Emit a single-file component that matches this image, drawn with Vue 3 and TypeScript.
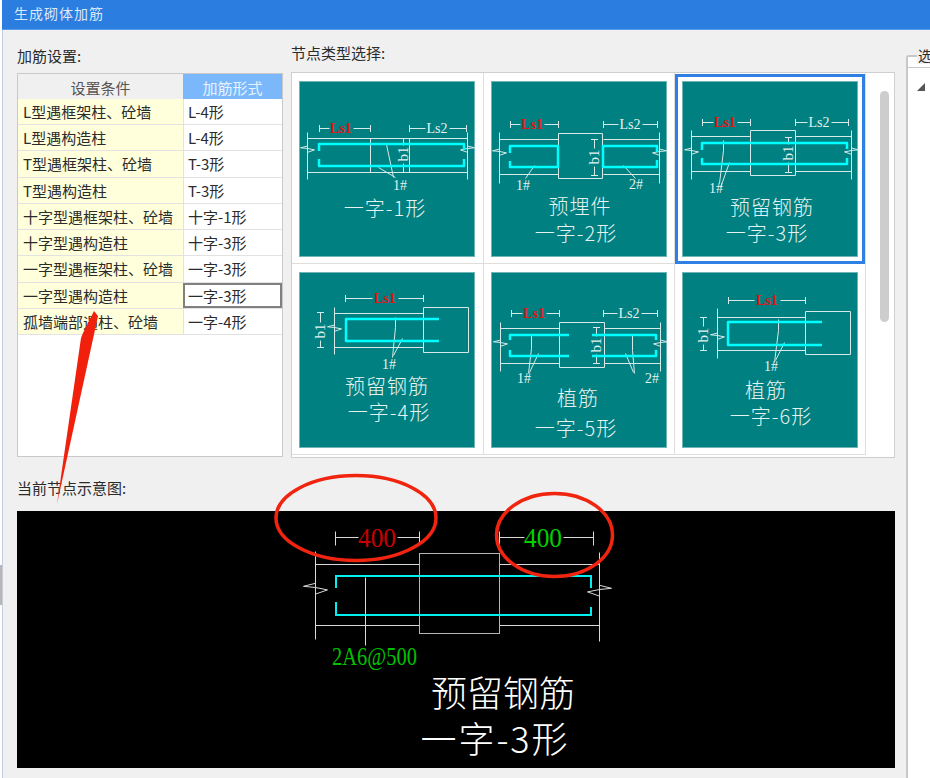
<template>
  <div class="page">
    <div class="desk-strip"><span class="strip-mark"></span></div>
    <div class="dialog">
      <div class="title-bar">生成砌体加筋</div>
      <div class="dialog-body">
        <div class="content">
          <div class="top-row">
            <section class="settings">
              <h3 class="label">加筋设置:</h3>
              <div class="rule-table">
                <div class="rule-head">
                  <div class="head-cond">设置条件</div>
                  <div class="head-form">加筋形式</div>
                </div>
                <div v-for="row in rules" :key="row.cond" class="rule-row">
                  <div class="cell-cond">{{ row.cond }}</div>
                  <div :class="['cell-form', { active: row.active }]">{{ row.form }}</div>
                </div>
              </div>
            </section>
            <section class="types">
              <h3 class="label">节点类型选择:</h3>
              <div class="type-panel">
                <div class="type-grid">
                  <div v-for="tile in tiles" :key="tile.id" class="type-cell">
                    <svg :class="['tile', { selected: tile.id === 3 }]" width="176" height="176" viewBox="0 0 176 176">
                      <path class="wire" :d="tile.wire" />
                      <path class="rebar" :d="tile.rebar" />
                      <text
                        v-for="t in tile.notes"
                        :key="t.text + t.x"
                        :class="['note', t.cls]"
                        :x="t.x"
                        :y="t.y"
                        :transform="t.cls === 'b1' ? `rotate(-90 ${t.x} ${t.y})` : undefined"
                      >{{ t.text }}</text>
                      <text
                        v-for="t in tile.titles"
                        :key="t.text"
                        class="tile-title"
                        :x="t.x"
                        :y="t.y - 1"
                      >{{ t.text }}</text>
                    </svg>
                  </div>
                </div>
                <div class="scroll-track"><div class="scroll-thumb"></div></div>
              </div>
            </section>
          </div>
          <h3 class="label preview-label">当前节点示意图:</h3>
          <svg class="preview" width="878" height="257" viewBox="17 511 878 257">
            <path class="dim" d="M335 531V545M335 537H358M397 537H419M419 531V545" />
            <path class="dim" d="M499 531V545M499 537H524M563 537H593M593 531V545" />
            <path class="wall" d="M315 551V639M599 552V641M315 564H419M499 564H599M315 625H419M499 625H599" />
            <path class="wall" :d="breakMark(315, 587, 12) + breakMark(599, 589, -12)" />
            <rect class="column" x="419.5" y="553.5" width="80" height="80" />
            <path class="rebar-big" d="M336 588V576H591V588M336 602V615H591V607" />
            <path class="wall" d="M365 577V645" />
            <text class="big-num red" x="377" y="537" textLength="38" lengthAdjust="spacingAndGlyphs">400</text>
            <text class="big-num green" x="543" y="537" textLength="38" lengthAdjust="spacingAndGlyphs">400</text>
            <text class="spacing" x="332" y="665" textLength="85" lengthAdjust="spacingAndGlyphs">2A6@500</text>
            <text class="caption" x="503" y="691">预留钢筋</text>
            <text class="caption wide" x="495" y="737">一字-3形</text>
          </svg>
        </div>
        <aside class="side-group">
          <span class="side-legend">选择</span>
          <div class="side-inner">
            <svg class="tree-arrow" width="8" height="8" viewBox="0 0 8 8"><path d="M8 0V8H0Z" /></svg>
          </div>
        </aside>
      </div>
    </div>
    <!-- red marks drawn over the screenshot -->
    <svg class="marks" width="930" height="778" viewBox="0 0 930 778">
      <ellipse cx="356" cy="518" rx="80" ry="42.5" />
      <ellipse cx="554.5" cy="535" rx="58" ry="41.5" />
      <polygon points="94,311 98,316 57,504 81,338 83,333" />
    </svg>
  </div>
</template>

<script setup lang="ts">
interface Rule {
  cond: string
  form: string
  active?: boolean
}

interface Note {
  x: number
  y: number
  text: string
  cls: string
}

interface Caption {
  x: number
  y: number
  text: string
}

interface Tile {
  id: number
  wire: string
  rebar: string
  notes: Note[]
  titles: Caption[]
}

const rules: Rule[] = [
  { cond: 'L型遇框架柱、砼墙', form: 'L-4形' },
  { cond: 'L型遇构造柱', form: 'L-4形' },
  { cond: 'T型遇框架柱、砼墙', form: 'T-3形' },
  { cond: 'T型遇构造柱', form: 'T-3形' },
  { cond: '十字型遇框架柱、砼墙', form: '十字-1形' },
  { cond: '十字型遇构造柱', form: '十字-3形' },
  { cond: '一字型遇框架柱、砼墙', form: '一字-3形' },
  { cond: '一字型遇构造柱', form: '一字-3形', active: true },
  { cond: '孤墙端部遇柱、砼墙', form: '一字-4形' }
]

const dimH = (a: number, b: number, y: number, cx: number, gap = 12) =>
  `M${a} ${y - 3.5}V${y + 3.5}M${a} ${y}H${cx - gap}M${cx + gap} ${y}H${b}M${b} ${y - 3.5}V${y + 3.5}`

const dimV = (x: number, a: number, b: number, cy: number, gap = 9) =>
  `M${x - 3.5} ${a}H${x + 3.5}M${x} ${a}V${cy - gap}M${x} ${cy + gap}V${b}M${x - 3.5} ${b}H${x + 3.5}`

// zigzag that marks a wall cut off, s scales and flips it
const breakMark = (x: number, y: number, s: number) =>
  `M${x} ${y - s * 0.35 * Math.sign(s)}L${x - s} ${y - s * 0.1 * Math.sign(s)}L${x} ${y}L${x + s} ${y + s * 0.2 * Math.sign(s)}L${x} ${y + s * 0.55 * Math.sign(s)}`

const small = 7

const tiles: Tile[] = [
  {
    id: 1,
    wire:
      dimH(20, 71, 47, 42) + dimH(110, 167, 47, 138) +
      'M8 51V98M168 51V98M8 57H168M8 91H168M71 57V91M110 57V91' +
      dimV(104, 57, 91, 73) +
      breakMark(8, 67, small) + breakMark(168, 67, -small) +
      'M87 63L94 96M79 86L96 96',
    rebar: 'M20 70V63H165V69M20 78V85H165V78',
    notes: [
      { x: 42, y: 47, text: 'Ls1', cls: 'ls-red' },
      { x: 138, y: 47, text: 'Ls2', cls: 'ls' },
      { x: 104, y: 73, text: 'b1', cls: 'b1' },
      { x: 101, y: 104, text: '1#', cls: 'num' }
    ],
    titles: [{ x: 86, y: 127, text: '一字-1形' }]
  },
  {
    id: 2,
    wire:
      dimH(19, 67, 43, 41) + dimH(112, 166, 43, 139) +
      'M8 51V102M168 51V102M8 58H67M112 58H168M8 93H67M112 93H168' +
      'M67 52H111V97H67Z' +
      dimV(103, 58, 94, 76) +
      breakMark(8, 70, small) + breakMark(168, 70, -small) +
      'M43 84L34 97M132 84L144 97',
    rebar: 'M19 72V65H67V86H19V80M166 71V65H112V86H166V79',
    notes: [
      { x: 41, y: 43, text: 'Ls1', cls: 'ls-red' },
      { x: 139, y: 43, text: 'Ls2', cls: 'ls' },
      { x: 103, y: 76, text: 'b1', cls: 'b1' },
      { x: 32, y: 104, text: '1#', cls: 'num' },
      { x: 145, y: 103, text: '2#', cls: 'num' }
    ],
    titles: [
      { x: 89, y: 125, text: '预埋件' },
      { x: 85, y: 152, text: '一字-2形' }
    ]
  },
  {
    id: 3,
    wire:
      dimH(20, 68, 41, 43) + dimH(113, 166, 41, 137) +
      'M9 49V98M169 49V98M9 55H68M113 55H169M9 90H68M113 90H169' +
      'M68 49H113V94H68Z' +
      dimV(106, 56, 91, 72) +
      breakMark(9, 69, small) + breakMark(169, 69, -small) +
      'M41 59V69L37 102M47 81L38 106',
    rebar: 'M20 69V62H165V68M20 77V83H165V77',
    notes: [
      { x: 43, y: 41, text: 'Ls1', cls: 'ls-red' },
      { x: 137, y: 41, text: 'Ls2', cls: 'ls' },
      { x: 106, y: 72, text: 'b1', cls: 'b1' },
      { x: 34, y: 107, text: '1#', cls: 'num' }
    ],
    titles: [
      { x: 90, y: 126, text: '预留钢筋' },
      { x: 85, y: 152, text: '一字-3形' }
    ]
  },
  {
    id: 4,
    wire:
      dimH(46, 124, 26, 86, 13) +
      'M35 35V82M35 41H124M35 75H124' +
      'M124 35H169V80H124Z' +
      dimV(21, 40, 75, 59) +
      breakMark(35, 55, small) +
      'M96 45V55L93 85M103 66L94 83',
    rebar: 'M140 47H47V69H140',
    notes: [
      { x: 86, y: 26, text: 'Ls1', cls: 'ls-red' },
      { x: 21, y: 59, text: 'b1', cls: 'b1' },
      { x: 90, y: 92, text: '1#', cls: 'num' }
    ],
    titles: [
      { x: 88, y: 114, text: '预留钢筋' },
      { x: 90, y: 140, text: '一字-4形' }
    ]
  },
  {
    id: 5,
    wire:
      dimH(20, 68, 41, 43) + dimH(112, 166, 41, 138) +
      'M9 50V99M169 50V99M9 56H68M113 56H169M9 91H68M113 91H169' +
      'M68 50H113V95H68Z' +
      dimV(105, 55, 91, 73) +
      breakMark(9, 70, small) + breakMark(169, 70, -small) +
      'M40 63V76L37 101M47 81L38 100M141 63V78L143 101M134 81L142 100',
    rebar: 'M19 68V63H78M19 78V84H78M101 63H165V68M101 84H165V78',
    notes: [
      { x: 43, y: 41, text: 'Ls1', cls: 'ls-red' },
      { x: 138, y: 41, text: 'Ls2', cls: 'ls' },
      { x: 105, y: 73, text: 'b1', cls: 'b1' },
      { x: 33, y: 106, text: '1#', cls: 'num' },
      { x: 161, y: 106, text: '2#', cls: 'num' }
    ],
    titles: [
      { x: 87, y: 126, text: '植筋' },
      { x: 85, y: 156, text: '一字-5形' }
    ]
  },
  {
    id: 6,
    wire:
      dimH(46, 123, 28, 85, 13) +
      'M35 36V86M35 45H123M35 78H123' +
      'M123 39H168V82H123Z' +
      dimV(21, 45, 78, 63) +
      breakMark(35, 63, small) +
      'M96 47V58L92 90M102 70L93 88',
    rebar: 'M140 50H46V73H140',
    notes: [
      { x: 85, y: 28, text: 'Ls1', cls: 'ls-red' },
      { x: 21, y: 63, text: 'b1', cls: 'b1' },
      { x: 89, y: 94, text: '1#', cls: 'num' }
    ],
    titles: [
      { x: 84, y: 118, text: '植筋' },
      { x: 89, y: 144, text: '一字-6形' }
    ]
  }
]
</script>

<style scoped>
.page {
  position: relative;
  display: flex;
  width: 930px;
  height: 778px;
  overflow: hidden;
  background: #f0f0f0;
  font-family: "Noto Sans CJK SC", "Liberation Sans", sans-serif;
  color: #2b2b2b;
}

.desk-strip {
  flex: none;
  width: 2px;
  padding-top: 565px;
  background: #ffffff;
}

.strip-mark {
  display: block;
  height: 40px;
  background: #b9b6b2;
}

.dialog {
  flex: 1;
  min-width: 0;
  display: flex;
  flex-direction: column;
}

.title-bar {
  height: 29px;
  padding-left: 12px;
  background: #2b7de0;
  border-bottom: 1px solid #5a9bea;
  color: #dbe8f8;
  font-size: 14px;
  line-height: 27px;
  letter-spacing: 1px;
}

.dialog-body {
  flex: 1;
  display: flex;
  border-left: 1px solid #c5cbe0;
  padding-left: 14px;
}

.content {
  flex: none;
  width: 878px;
}

.top-row {
  display: flex;
  gap: 8px;
}

.label {
  margin: 0;
  height: 20px;
  font-size: 15px;
  font-weight: 400;
  line-height: 20px;
  white-space: nowrap;
}

.settings {
  flex: none;
  width: 266px;
  padding-top: 16px;
}

.rule-table {
  margin-top: 7px;
  height: 384px;
  box-sizing: border-box;
  background: #ffffff;
  border: 1px solid #c9c9c9;
  font-size: 15px;
}

.rule-head {
  display: flex;
  height: 25px;
  line-height: 27px;
  text-align: center;
}

.head-cond {
  width: 165px;
  background: #f0f0f0;
  color: #555555;
}

.head-form {
  flex: 1;
  background: #7ab8fb;
  color: #e6f2ff;
}

.rule-row {
  display: flex;
  height: 26.22px;
  box-sizing: border-box;
  border-bottom: 1px solid #e2e2e2;
  line-height: 26px;
  white-space: nowrap;
}

.cell-cond {
  width: 165px;
  box-sizing: border-box;
  padding-left: 5px;
  background: #ffffdc;
}

.cell-form {
  flex: 1;
  box-sizing: border-box;
  padding-left: 4px;
  border-left: 1px solid #e2e2e2;
}

.cell-form.active {
  border: 2px solid #808080;
  padding-left: 3px;
  line-height: 22px;
}

.types {
  flex: none;
  width: 604px;
  padding-top: 13px;
}

.type-panel {
  display: flex;
  margin-top: 9px;
  height: 386px;
  box-sizing: border-box;
  background: #ffffff;
  border: 1px solid #cfcfcf;
}

.type-grid {
  display: grid;
  grid-template-columns: 192px 191px 191px;
  grid-template-rows: 191px 191px;
  flex: none;
}

.type-cell {
  box-sizing: border-box;
  padding: 8px 0 0 7px;
  border-right: 1px solid #dedede;
  border-bottom: 1px solid #dedede;
}

.tile {
  display: block;
  background: #008080;
  box-shadow: inset 0 0 0 1px #6fb5b5;
}

.tile.selected {
  box-shadow: inset 0 0 0 1px #6fb5b5, 0 0 0 4px #ffffff, 0 0 0 7px #2f80e4;
}

.wire {
  fill: none;
  stroke: #d6eaea;
  stroke-width: 1;
  transform: translate(0.5px, 0.5px);
}

.rebar {
  fill: none;
  stroke: #00ffff;
  stroke-width: 2.5;
  stroke-linejoin: round;
}

.note {
  font-family: "Liberation Serif", serif;
  fill: #e4f2f2;
  text-anchor: middle;
  dominant-baseline: central;
}

.ls-red {
  fill: #e01414;
  font-size: 14px;
  font-weight: 700;
}

.ls {
  font-size: 14px;
}

.b1 {
  font-size: 15px;
}

.num {
  font-size: 14px;
}

.tile-title {
  font-size: 20px;
  font-weight: 300;
  letter-spacing: 1px;
  fill: #e4f2f2;
  text-anchor: middle;
  dominant-baseline: central;
}

.scroll-track {
  padding: 18px 0 0 14px;
}

.scroll-thumb {
  width: 9px;
  height: 231px;
  border-radius: 5px;
  background: #cdcdcd;
}

.preview-label {
  margin-top: 20px;
  margin-bottom: 13px;
}

.preview {
  display: block;
  background: #000000;
}

.dim,
.wall {
  fill: none;
  stroke: #d8d8d8;
  stroke-width: 1;
  transform: translate(0.5px, 0.5px);
}

.column {
  fill: none;
  stroke: #b5b5b5;
  stroke-width: 1;
}

.rebar-big {
  fill: none;
  stroke: #00f0f0;
  stroke-width: 2;
}

.big-num {
  font-family: "Liberation Serif", serif;
  font-size: 28px;
  text-anchor: middle;
  dominant-baseline: central;
}

.big-num.red {
  fill: #c80000;
}

.big-num.green {
  fill: #00d000;
}

.spacing {
  font-family: "Liberation Serif", serif;
  font-size: 25px;
  fill: #00c000;
}

.caption {
  font-size: 36px;
  font-weight: 300;
  fill: #ffffff;
  text-anchor: middle;
  dominant-baseline: central;
}

.caption.wide {
  letter-spacing: 2px;
}

.side-group {
  position: relative;
  flex: none;
  width: 60px;
  margin: 25px 0 0 11px;
  box-sizing: border-box;
  border: 2px solid #c8c8c8;
  border-bottom: none;
  border-radius: 3px 3px 0 0;
  background: #ffffff;
}

.side-legend {
  position: absolute;
  top: -11px;
  left: 9px;
  padding: 0 1px;
  background: #f0f0f0;
  font-size: 14px;
  line-height: 18px;
  white-space: nowrap;
}

.side-inner {
  margin-top: 10px;
  padding: 15px 0 0 9px;
  border-top: 1px solid #c8c8c8;
}

.tree-arrow {
  display: block;
  fill: #555555;
}

.marks {
  position: absolute;
  top: 0;
  left: 0;
  pointer-events: none;
}

.marks ellipse {
  fill: none;
  stroke: #f0240f;
  stroke-width: 3.5;
}

.marks polygon {
  fill: #f0200c;
}
</style>

<style>
html,
body {
  margin: 0;
  overflow: hidden;
}
</style>
